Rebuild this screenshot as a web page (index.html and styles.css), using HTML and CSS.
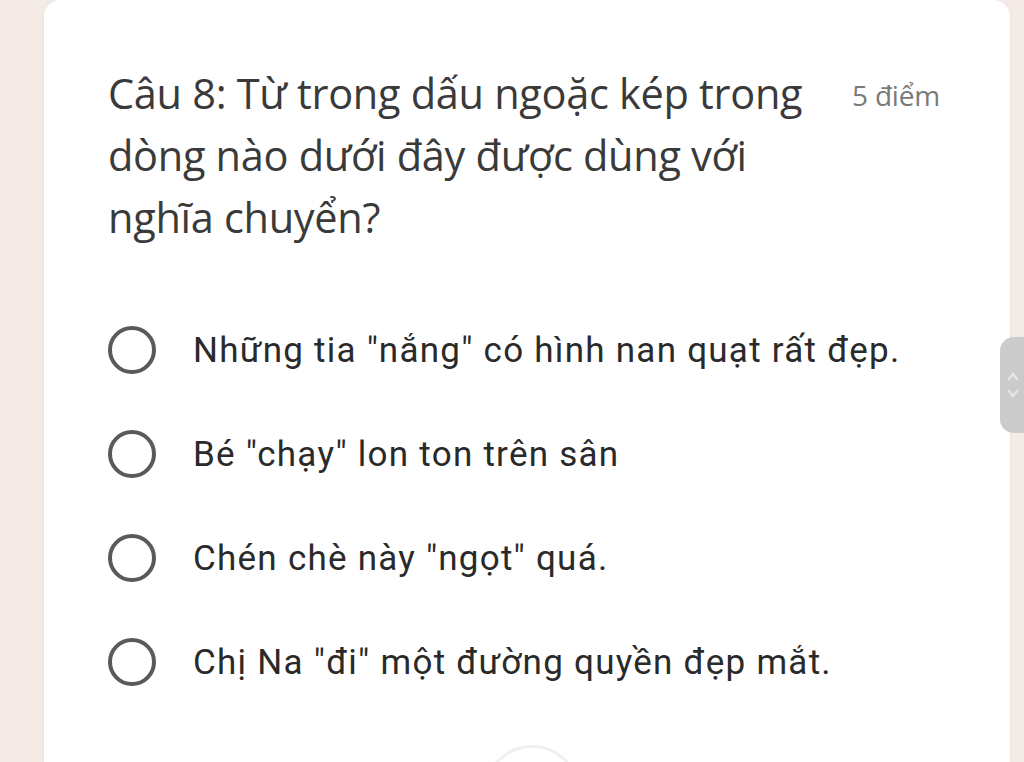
FILE: index.html
```html
<!DOCTYPE html>
<html lang="vi">
<head>
<meta charset="utf-8">
<link rel="stylesheet" href="styles.css">
</head>
<body class="page">
  <div class="card">
    <div class="question-head">
      <h2 class="question-title">Câu 8: Từ trong dấu ngoặc kép trong dòng nào dưới đây được dùng với nghĩa chuyển?</h2>
      <span class="points">5 điểm</span>
    </div>
    <ul class="options">
      <li class="option"><span class="radio"></span><span class="label">Những tia "nắng" có hình nan quạt rất đẹp.</span></li>
      <li class="option"><span class="radio"></span><span class="label">Bé "chạy" lon ton trên sân</span></li>
      <li class="option"><span class="radio"></span><span class="label">Chén chè này "ngọt" quá.</span></li>
      <li class="option"><span class="radio"></span><span class="label">Chị Na "đi" một đường quyền đẹp mắt.</span></li>
    </ul>
    <div class="fab-ghost"></div>
  </div>
  <div class="scroll-handle">
    <svg width="14" height="40" viewBox="0 0 14 40"><path d="M3 14 L7 9 L11 14 M3 26 L7 31 L11 26" fill="none" stroke="#e6e6e6" stroke-width="2.5" stroke-linecap="round"/></svg>
  </div>
</body>
</html>
```

FILE: styles.css
```css
/* question card, google-forms like */
html, body {
  height: 100%;
}
.page {
  margin: 0;
  padding: 0 14px 0 44px;
  background: #f4ebe6;
  overflow: hidden;
  font-family: "Open Sans", "Noto Sans", sans-serif;
  color: #383838;
}
.card {
  position: relative;
  background: #fff;
  border-radius: 16px 16px 0 0;
  min-height: 100%;
  padding: 62px 20px 0 64px;
  box-sizing: border-box;
  box-shadow: 0 0 3px rgba(0, 0, 0, 0.06);
}
.question-head {
  display: flex;
  align-items: flex-start;
  gap: 34px;
}
.question-title {
  margin: 0;
  width: 710px;
  font-size: 41.5px;
  font-weight: 400;
  line-height: 62px;
  color: #3a3a3a;
  letter-spacing: -0.3px;
}
.points {
  padding-top: 14px;
  font-size: 28px;
  color: #7a7a7a;
  letter-spacing: -0.2px;
}
.options {
  list-style: none;
  margin: 78px 0 0;
  padding: 0;
  display: flex;
  flex-direction: column;
  gap: 56px;
}
.option {
  display: flex;
  align-items: center;
  gap: 37px;
  height: 48px;
}
.radio {
  width: 40px;
  height: 40px;
  border: 4px solid #5a5a5a;
  border-radius: 50%;
  flex: none;
}
.label {
  font-family: "Roboto", "Noto Sans", sans-serif;
  font-size: 35px;
  font-weight: 400;
  letter-spacing: 1.25px;
  color: #2a2a2a;
}
.fab-ghost {
  position: absolute;
  left: 440px;
  top: 745px;
  width: 90px;
  height: 90px;
  border-radius: 50%;
  border: 3px solid #f0f0f0;
}
.scroll-handle {
  position: absolute;
  left: 1000px;
  top: 337px;
  width: 40px;
  height: 96px;
  border-radius: 14px;
  background: #cbcbcb;
  display: flex;
  align-items: center;
  padding-left: 6px;
  box-sizing: border-box;
}
```
